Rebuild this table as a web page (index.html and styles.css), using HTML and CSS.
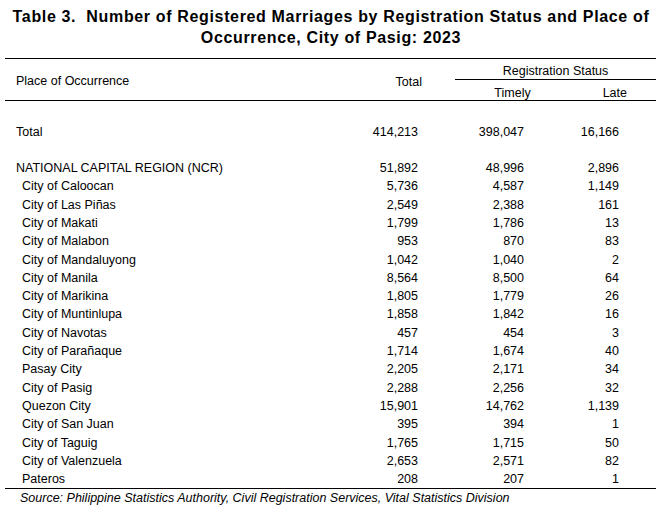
FILE: index.html
```html
<!DOCTYPE html>
<html>
<head>
<meta charset="utf-8">
<link rel="stylesheet" href="styles.css">
</head>
<body>
<h1 class="title">Table 3.&nbsp; Number of Registered Marriages by Registration Status and Place of<br>Occurrence, City of Pasig: 2023</h1>
<table class="stats">
  <colgroup>
    <col class="c-place"><col class="c-total"><col class="c-timely"><col class="c-late">
  </colgroup>
  <thead>
    <tr class="h1">
      <th rowspan="2" class="th-place">Place of Occurrence</th>
      <th rowspan="2" class="th-total">Total</th>
      <th colspan="2" class="th-status">Registration Status</th>
    </tr>
    <tr class="h2">
      <th class="th-timely">Timely</th>
      <th class="th-late">Late</th>
    </tr>
  </thead>
  <tbody>
    <tr class="first"><td class="name">Total</td><td class="n1">414,213</td><td class="n2">398,047</td><td class="n3">16,166</td></tr>
    <tr class="spacer"><td colspan="4"></td></tr>
    <tr><td class="name">NATIONAL CAPITAL REGION (NCR)</td><td class="n1">51,892</td><td class="n2">48,996</td><td class="n3">2,896</td></tr>
    <tr><td class="name sub">City of Caloocan</td><td class="n1">5,736</td><td class="n2">4,587</td><td class="n3">1,149</td></tr>
    <tr><td class="name sub">City of Las Piñas</td><td class="n1">2,549</td><td class="n2">2,388</td><td class="n3">161</td></tr>
    <tr><td class="name sub">City of Makati</td><td class="n1">1,799</td><td class="n2">1,786</td><td class="n3">13</td></tr>
    <tr><td class="name sub">City of Malabon</td><td class="n1">953</td><td class="n2">870</td><td class="n3">83</td></tr>
    <tr><td class="name sub">City of Mandaluyong</td><td class="n1">1,042</td><td class="n2">1,040</td><td class="n3">2</td></tr>
    <tr><td class="name sub">City of Manila</td><td class="n1">8,564</td><td class="n2">8,500</td><td class="n3">64</td></tr>
    <tr><td class="name sub">City of Marikina</td><td class="n1">1,805</td><td class="n2">1,779</td><td class="n3">26</td></tr>
    <tr><td class="name sub">City of Muntinlupa</td><td class="n1">1,858</td><td class="n2">1,842</td><td class="n3">16</td></tr>
    <tr><td class="name sub">City of Navotas</td><td class="n1">457</td><td class="n2">454</td><td class="n3">3</td></tr>
    <tr><td class="name sub">City of Parañaque</td><td class="n1">1,714</td><td class="n2">1,674</td><td class="n3">40</td></tr>
    <tr><td class="name sub">Pasay City</td><td class="n1">2,205</td><td class="n2">2,171</td><td class="n3">34</td></tr>
    <tr><td class="name sub">City of Pasig</td><td class="n1">2,288</td><td class="n2">2,256</td><td class="n3">32</td></tr>
    <tr><td class="name sub">Quezon City</td><td class="n1">15,901</td><td class="n2">14,762</td><td class="n3">1,139</td></tr>
    <tr><td class="name sub">City of San Juan</td><td class="n1">395</td><td class="n2">394</td><td class="n3">1</td></tr>
    <tr><td class="name sub">City of Taguig</td><td class="n1">1,765</td><td class="n2">1,715</td><td class="n3">50</td></tr>
    <tr><td class="name sub">City of Valenzuela</td><td class="n1">2,653</td><td class="n2">2,571</td><td class="n3">82</td></tr>
    <tr class="last"><td class="name sub">Pateros</td><td class="n1">208</td><td class="n2">207</td><td class="n3">1</td></tr>
  </tbody>
</table>
<p class="source">Source: Philippine Statistics Authority, Civil Registration Services, Vital Statistics Division</p>
</body>
</html>
```
FILE: styles.css
```css
html, body {
  margin: 0;
  padding: 0;
  background: #ffffff;
  color: #000000;
}
body {
  width: 662px;
  font-family: "Liberation Sans", Arial, sans-serif;
  font-size: 12.5px;
}
.title {
  margin: 6px 0 0 0;
  font-size: 16px;
  font-weight: bold;
  letter-spacing: 0.65px;
  line-height: 21px;
  text-align: center;
}
.stats {
  margin: 10px 0 0 5px;
  width: 651px;
  table-layout: fixed;
  border-collapse: collapse;
  border-top: 1px solid #000;
  border-bottom: 1px solid #000;
}
.c-place { width: 340px; }
.c-total { width: 110px; }
.c-timely { width: 105px; }
.c-late { width: 96px; }
.stats th {
  font-weight: normal;
  padding: 0;
  line-height: 14px;
}
.stats thead {
  border-bottom: 1px solid #000;
}
.stats .h1 { height: 21px; }
.stats .h2 { height: 21px; }
.stats .th-place {
  text-align: left;
  padding-left: 11px;
  padding-top: 3px;
  vertical-align: middle;
}
.stats .th-total {
  text-align: right;
  padding-right: 33px;
  padding-top: 5px;
  vertical-align: middle;
}
.stats .th-status {
  text-align: center;
  vertical-align: bottom;
  border-bottom: 1px solid #000;
  padding-bottom: 1px;
}
.stats .th-timely {
  text-align: center;
  padding-left: 10px;
  vertical-align: bottom;
  padding-bottom: 0;
}
.stats .th-late {
  text-align: right;
  padding-right: 29px;
  vertical-align: bottom;
  padding-bottom: 0;
}
.stats td {
  padding: 0;
  line-height: 18.3px;
  white-space: nowrap;
}
.stats tr.first td {
  padding-top: 21.5px;
}
.stats .spacer td {
  height: 18.3px;
}
.stats .name { padding-left: 11px; }
.stats .name.sub { padding-left: 17px; }
.stats .n1 { text-align: right; padding-right: 37px; }
.stats .n2 { text-align: right; padding-right: 36px; }
.stats .n3 { text-align: right; padding-right: 37px; }
.source {
  margin: 0;
  padding-left: 20px;
  font-style: italic;
  line-height: 18px;
}
```
